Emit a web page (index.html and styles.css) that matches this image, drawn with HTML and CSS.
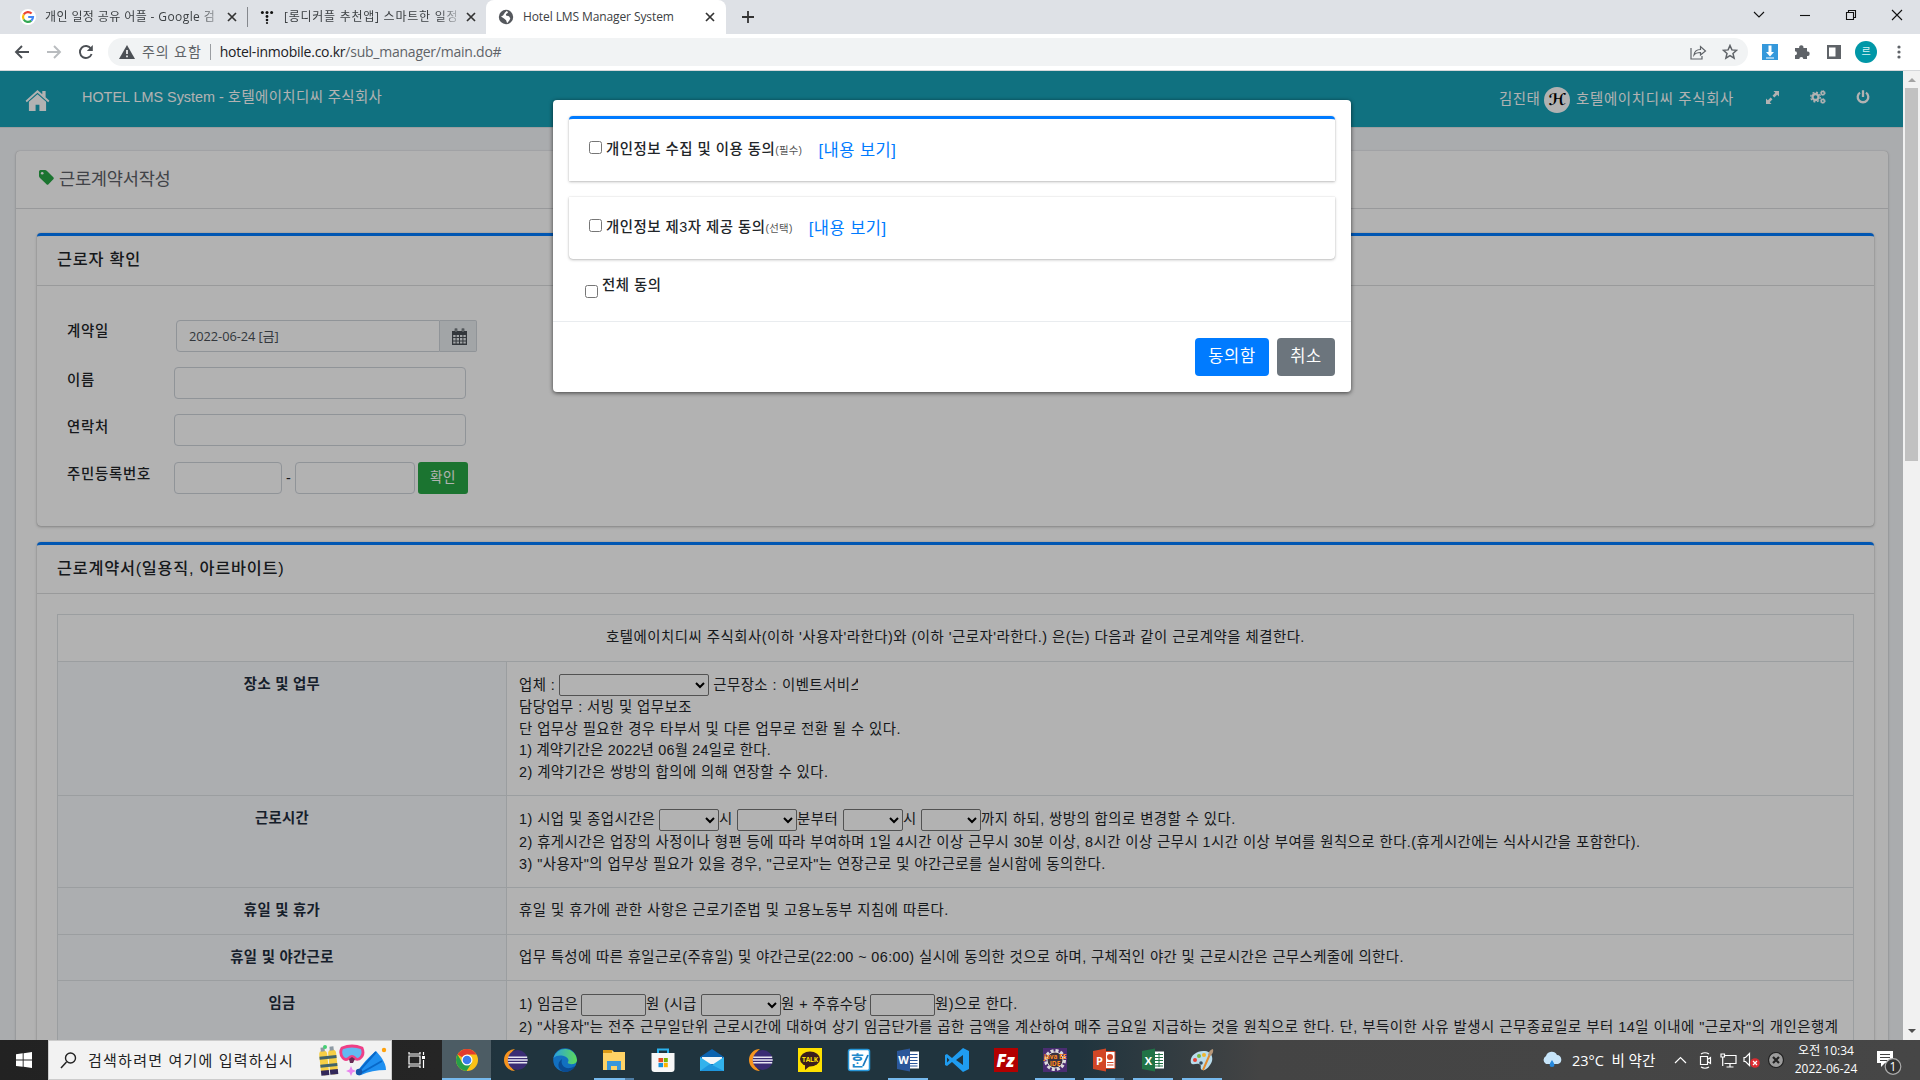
FILE: index.html
```html
<!DOCTYPE html>
<html lang="ko">
<head>
<meta charset="utf-8">
<title>Hotel LMS Manager System</title>
<link rel="stylesheet" href="styles.css">
</head>
<body>
<svg class="defs" width="0" height="0">
  <symbol id="close" viewBox="0 0 10 10"><path d="M1 1l8 8M9 1l-8 8" fill="none" stroke="currentColor" stroke-width="1.7"/></symbol>
  <symbol id="eclipse" viewBox="0 0 24 24"><path d="M11 1A11 11 0 0 0 11 23A13.500 13.500 0 0 1 11 1z" fill="#f7941e"/><circle cx="13.700" cy="12" r="10" fill="#3a2c74"/><path d="M4.200 9.200h19M3.700 12h20M4.200 14.800h19" stroke="#e8e6f2" stroke-width="1.500"/></symbol>
</svg>
<div class="screen">
  <header class="browser">
    <div class="tabs">
      <div class="tab tab-a">
        <svg class="fav" viewBox="0 0 16 16"><circle cx="8" cy="8" r="8" fill="#fff"/><g fill="none" stroke-width="2.2"><path d="M11.6 4.6A5 5 0 0 0 3.7 5.5" stroke="#ea4335"/><path d="M3.7 5.5a5 5 0 0 0 0 5" stroke="#fbbc05"/><path d="M3.7 10.5a5 5 0 0 0 7.6 1.2" stroke="#34a853"/><path d="M11.3 11.7A5 5 0 0 0 13 8H8.2" stroke="#4285f4"/></g></svg>
        <span class="ttl fade">개인 일정 공유 어플 - Google 검</span>
        <svg class="x"><use href="#close"/></svg>
      </div>
      <div class="tab tab-b">
        <svg class="fav" viewBox="0 0 16 16" fill="#111"><circle cx="3.4" cy="3.5" r="1.5"/><circle cx="8" cy="3.5" r="1.5"/><circle cx="12.6" cy="3.5" r="1.5"/><circle cx="8" cy="7.5" r="1.4"/><circle cx="8" cy="11" r="1.3"/><circle cx="8" cy="14" r="1.1"/></svg>
        <span class="ttl fade">[롱디커플 추천앱] 스마트한 일정</span>
        <svg class="x"><use href="#close"/></svg>
      </div>
      <div class="tab tab-c">
        <svg class="fav" viewBox="0 0 16 16"><circle cx="8" cy="8" r="7.2" fill="#55585d"/><path d="M9 1.8l1 2-2 1.2v1.6l3 .6 1.3 2.2-1 2-2.2 2.8-1-3L6 9.5 3 7.6l2-1.2 2-3z" fill="#fff"/></svg>
        <span class="ttl">Hotel LMS Manager System</span>
        <svg class="x"><use href="#close"/></svg>
      </div>
      <svg class="plus" viewBox="0 0 14 14"><path d="M7 1v12M1 7h12" stroke="#333" stroke-width="1.8"/></svg>
      <div class="winbtns">
        <svg width="12" height="12" viewBox="0 0 12 12"><path d="M1 3l5 5 5-5"/></svg>
        <svg width="12" height="12" viewBox="0 0 12 12"><path d="M1 6.5h10"/></svg>
        <svg width="12" height="12" viewBox="0 0 12 12"><path d="M1.5 3.5h7v7h-7zM3.5 3.500V1.500h7v7H8.500"/></svg>
        <svg width="12" height="12" viewBox="0 0 12 12"><path d="M1 1l10 10M11 1L1 11"/></svg>
      </div>
    </div>
    <div class="toolbar">
      <svg class="nav" viewBox="0 0 16 16"><path d="M15 8H2M8 2L2 8l6 6" stroke="#4c5055"/></svg>
      <svg class="nav" viewBox="0 0 16 16"><path d="M1 8h13M8 2l6 6-6 6" stroke="#b9bcbf"/></svg>
      <svg class="nav" viewBox="0 0 16 16"><path d="M13.600 10A6 6 0 1 1 13 4.800" stroke="#4c5055"/><path d="M14.800 1v6h-6z" fill="#4c5055" stroke="none"/></svg>
      <div class="omni">
        <svg width="16" height="14" viewBox="0 0 16 14"><path d="M8 0l8 14H0z" fill="#4c5055"/><path d="M8 5v4M8 10.500v1.700" stroke="#fff" stroke-width="1.600"/></svg>
        <span class="warn">주의 요함</span><i class="bar"></i>
        <span class="url"><b>hotel-inmobile.co.kr</b>/sub_manager/main.do#</span>
        <svg class="share" width="17" height="16" viewBox="0 0 17 16"><path d="M1 4v11h11v-3M4 11c.5-4 3-5.500 6.500-5.500V2.500L15.500 7l-5 4V8.500C7.500 8.500 5.500 9 4 11z" fill="none" stroke="#5f6368" stroke-width="1.200"/></svg>
        <svg width="16" height="16" viewBox="0 0 16 16"><path d="M8 1.500l1.900 4.400 4.700.4-3.600 3.100 1.100 4.700L8 11.600l-4.100 2.500L5 9.400 1.400 6.300l4.700-.4z" fill="none" stroke="#5f6368" stroke-width="1.500"/></svg>
      </div>
      <svg class="ext e1" viewBox="0 0 16 16"><path d="M0 0h16v16H0z" fill="#3498db"/><path d="M6.500 1.500h3V8H12l-4 4.500L4 8h2.500zM4 13.500h8v1H4z" fill="#fff"/></svg>
      <svg class="ext" viewBox="0 0 16 16"><path d="M1 4h4.200a2.200 2.200 0 1 1 4.200 0H13v3.600a2.200 2.200 0 1 1 0 4.300V15H9.300a2 2 0 0 0-4 0H1v-3.800a2 2 0 0 0 0-4z" fill="#5f6368"/></svg>
      <svg class="ext" viewBox="0 0 16 16"><path d="M1 1h14v14H1z" fill="#5f6368"/><path d="M3 3.500h6.500v9H3z" fill="#fff"/></svg>
      <span class="me">르</span>
      <svg class="ext" viewBox="0 0 16 16" fill="#5f6368"><circle cx="8" cy="3" r="1.600"/><circle cx="8" cy="8" r="1.600"/><circle cx="8" cy="13" r="1.600"/></svg>
    </div>
  </header>

  <div class="viewport">
    <main class="page">
      <nav class="top">
        <svg class="home" viewBox="0 0 25 22" fill="#fff"><path d="M12.500 0L0 11.300l1.300 1.500L12.500 3l11.200 9.800 1.300-1.500-4-3.600V1h-3.500v3.500z"/><path d="M12.500 4.500L3.500 12.300V22h7v-6.500h4V22h7v-9.700z"/></svg>
        <span class="brand">HOTEL LMS System - <span class="kr">호텔에이치디씨 주식회사</span></span>
        <span class="user">김진태</span><span class="logo">ℋ</span><span class="corp">호텔에이치디씨 주식회사</span>
        <svg class="t1" viewBox="0 0 14 14" fill="#fff"><path d="M8 0h6v6l-2-2-3 3-2-2 3-3zM0 14V8l2 2 3-3 2 2-3 3 2 2z"/></svg>
        <svg class="t2" viewBox="0 0 16 14"><g fill="none" stroke="#fff"><circle cx="5.500" cy="7" r="3" stroke-width="2.300"/><circle cx="5.500" cy="7" r="4.800" stroke-width="1.300" stroke-dasharray="2 1.770"/><circle cx="12.800" cy="3" r="1.600" stroke-width="1.500"/><circle cx="12.800" cy="3" r="2.500" stroke-width=".8" stroke-dasharray="1.200 .760"/><circle cx="12.800" cy="11" r="1.600" stroke-width="1.500"/><circle cx="12.800" cy="11" r="2.500" stroke-width=".8" stroke-dasharray="1.200 .760"/></g></svg>
        <svg class="t3" viewBox="0 0 14 14"><path d="M4 2.600a5.300 5.300 0 1 0 6 0M7 .3V7" fill="none" stroke="#fff" stroke-width="2.300"/></svg>
      </nav>
      <section class="outer">
        <h1><svg width="15" height="15" viewBox="0 0 15 15"><path d="M0 1.500Q0 0 1.500 0H6q1 0 2 1l6.300 6.300q1 1 0 2l-4.800 5q-1 1-2 0L1 8Q0 7 0 6z" fill="#28a745"/><circle cx="3.200" cy="3.200" r="1.300" fill="#fff"/></svg>근로계약서작성</h1>
        <div class="outer-body">
          <section class="card worker">
            <h2>근로자 확인</h2>
            <div class="form">
              <div class="row"><label>계약일</label><div class="date">2022-06-24 [금]</div><div class="addon"><svg width="15" height="17" viewBox="0 0 15 17"><path d="M0 3h15v14H0z" fill="#495057"/><path d="M1.200 7h2.400v2H1.200zM4.600 7h2.400v2H4.600zM8 7h2.400v2H8zM11.400 7h2.400v2h-2.400zM1.200 10h2.400v2.400H1.200zM4.600 10h2.400v2.400H4.600zM8 10h2.400v2.400H8zM11.400 10h2.400v2.400h-2.400zM1.200 13.400h2.400v2.200H1.200zM4.600 13.400h2.400v2.200H4.600zM8 13.400h2.400v2.200H8zM11.400 13.400h2.400v2.200h-2.400z" fill="#e9ecef"/><path d="M4 .5v4M11 .5v4" stroke="#495057" stroke-width="2.600"/><path d="M4 1.300v2.500M11 1.300v2.500" stroke="#e9ecef" stroke-width=".8"/></svg></div></div>
              <div class="row"><label>이름</label><div class="field w292"></div></div>
              <div class="row"><label>연락처</label><div class="field w292"></div></div>
              <div class="row last"><label>주민등록번호</label><div class="field w108"></div><span class="dash">-</span><div class="field w120"></div><div class="ok">확인</div></div>
            </div>
          </section>
          <section class="card contract">
            <h2>근로계약서(일용직, 아르바이트)</h2>
            <table>
              <colgroup><col class="c1"><col></colgroup>
              <tr><td colspan="2" class="intro">호텔에이치디씨 주식회사(이하 '사용자'라한다)와 (이하 '근로자'라한다.) 은(는) 다음과 같이 근로계약을 체결한다.</td></tr>
              <tr><th>장소 및 업무</th><td>
                <div class="line ctl"><span>업체 :</span><select class="s150"></select><span>근무장소 :</span><span class="clip">이벤트서비스</span></div>
                <div class="line">담당업무 : 서빙 및 업무보조</div>
                <div class="line">단 업무상 필요한 경우 타부서 및 다른 업무로 전환 될 수 있다.</div>
                <div class="line tight">1) 계약기간은 2022년 06월 24일로 한다.</div>
                <div class="line">2) 계약기간은 쌍방의 합의에 의해 연장할 수 있다.</div></td></tr>
              <tr><th>근로시간</th><td>
                <div class="line ctl"><span class="lead">1) 시업 및 종업시간은</span><select class="s60"></select><span class="g18">시</span><select class="s60 m0"></select><span class="g46">분부터</span><select class="s60 m0"></select><span class="g18">시</span><select class="s60 m0"></select><span>까지 하되, 쌍방의 합의로 변경할 수 있다.</span></div>
                <div class="line">2) 휴게시간은 업장의 사정이나 형편 등에 따라 부여하며 1일 4시간 이상 근무시 30분 이상, 8시간 이상 근무시 1시간 이상 부여를 원칙으로 한다.(휴게시간에는 식사시간을 포함한다).</div>
                <div class="line">3) "사용자"의 업무상 필요가 있을 경우, "근로자"는 연장근로 및 야간근로를 실시함에 동의한다.</div></td></tr>
              <tr><th>휴일 및 휴가</th><td><div class="line wide">휴일 및 휴가에 관한 사항은 근로기준법 및 고용노동부 지침에 따른다.</div></td></tr>
              <tr><th>휴일 및 야간근로</th><td><div class="line semi">업무 특성에 따른 휴일근로(주휴일) 및 야간근로(22:00 ~ 06:00) 실시에 동의한 것으로 하며, 구체적인 야간 및 근로시간은 근무스케줄에 의한다.</div></td></tr>
              <tr><th>임금</th><td>
                <div class="line ctl"><span class="lead2">1) 임금은</span><i class="inp i65"></i><span class="g55">원 (시급</span><select class="s80 m0"></select><span class="g89">원 + 주휴수당</span><i class="inp i65 m0"></i><span>원)으로 한다.</span></div>
                <div class="line wide">2) "사용자"는 전주 근무일단위 근로시간에 대하여 상기 임금단가를 곱한 금액을 계산하여 매주 금요일 지급하는 것을 원칙으로 한다. 단, 부득이한 사유 발생시 근무종료일로 부터 14일 이내에 "근로자"의 개인은행계</div>
                <div class="line ctl third"><i class="inp i100"></i><i class="inp i100"></i></div></td></tr>
            </table>
          </section>
        </div>
      </section>
    </main>
    <div class="shade"></div>
    <div class="modal">
      <div class="modal-body">
        <div class="agree first"><i class="cb"></i><b>개인정보 수집 및 이용 동의</b><small>(필수)</small><a>[내용 보기]</a></div>
        <div class="agree second"><i class="cb"></i><b>개인정보 제3자 제공 동의</b><small>(선택)</small><a>[내용 보기]</a></div>
        <div class="all"><i class="cb"></i><b>전체 동의</b></div>
      </div>
      <div class="modal-foot"><span class="btn blue">동의함</span><span class="btn gray">취소</span></div>
    </div>
    <aside class="scroll"><i class="up"></i><i class="thumb"></i><i class="down"></i></aside>
  </div>

  <footer class="taskbar">
    <div class="start"><svg width="16" height="16" viewBox="0 0 16 16" fill="#fff"><path d="M0 2.200L6.700 1.300v6.300H0zM7.600 1.200L16 0v7.600H7.600zM0 8.500h6.700v6.300L0 13.900zM7.600 8.500H16V16l-8.400-1.200z"/></svg></div>
    <div class="search">
      <svg width="17" height="17" viewBox="0 0 17 17"><path d="M1 16l5.500-6" stroke="#222" stroke-width="1.500"/><circle cx="10.500" cy="6" r="5" fill="none" stroke="#222" stroke-width="1.400"/></svg>
      <span>검색하려면 여기에 입력하십시</span>
      <svg class="dive" width="70" height="32" viewBox="0 0 70 32"><g transform="rotate(-6 10 18)"><rect x="2" y="6" width="8" height="25" rx="4" fill="#f6cf45"/><rect x="11" y="6" width="8" height="25" rx="4" fill="#f6cf45"/><path d="M2 12h17v3H2zM2 20h17v3H2z" fill="#41636a"/><path d="M2 26h8v5H2zM11 26h8v5h-8z" fill="#33285a"/><path d="M4 3h4v4H4zM13 3h4v4h-4z" fill="#8d99a3"/></g><circle cx="7" cy="3" r="2" fill="#44cf73"/><path d="M24 4q10-4 20 0 3 7-3 11-3 1-4-1-3-3-6 0-3 3-6 0-4-5-1-10z" fill="#62b9f2" stroke="#ee3f86" stroke-width="2.800"/><path d="M31 15l3-2 3 2-2 4h-3z" fill="#672b55"/><path d="M39 28q8-12 19-21l5 6q5 7 5 13-14 0-25 5-5 1-4-3z" fill="#1e8ff0"/><path d="M41 27l17-19M43 29l21-12" stroke="#0868c8" stroke-width="2"/><circle cx="41" cy="28" r="3.200" fill="#1556a9"/><path d="M33 22l1.500 3.500L38 27l-3.500 1.500L33 32l-1.500-3.500L28 27l3.500-1.500z" fill="#ea85ef"/><circle cx="66" cy="6" r="2.200" fill="#ffa20d"/></svg>
    </div>
    <div class="task tv"><svg width="18" height="18" viewBox="0 0 18 18" fill="none" stroke="#fff" stroke-width="1.200"><path d="M1 5h11v8H1zM1 1v2h11V1M1 17v-2h11v2M15.500 1v3M15.500 9v8"/><path d="M14 5h3v3h-3z" fill="#fff" stroke="none"/></svg></div>
    <div class="task on act"><svg viewBox="0 0 24 24"><circle cx="12" cy="12" r="11" fill="#fbc116"/><path d="M12 12L2.500 6.500A11 11 0 0 1 21.500 6.500H12z" fill="#e33b2e"/><path d="M2.500 6.500A11 11 0 0 0 11.500 23L17 14.500 7.500 15z" fill="#269e49"/><circle cx="12" cy="12" r="5.500" fill="#fff"/><circle cx="12" cy="12" r="4.300" fill="#3a7bec"/></svg></div>
    <div class="task"><svg viewBox="0 0 24 24"><use href="#eclipse" width="24" height="24"/></svg></div>
    <div class="task"><svg viewBox="0 0 24 24"><defs><linearGradient id="ed" x1="0" y1="0" x2="1" y2="0"><stop offset="0" stop-color="#2a9fe0"/><stop offset="1" stop-color="#5ddb58"/></linearGradient></defs><circle cx="12" cy="12" r="11.800" fill="#1270c0"/><path d="M.4 10A12 12 0 0 1 24 12c0 4-5 5-8.500 3.500-1.500-1 0-1.500 0-3.500C15 8 5 5 .4 10z" fill="url(#ed)"/><path d="M9 11c-2 6 3 10 8 9 3-.5 5-2 5-2-2 4-6 6-10 6C5 23 3 15 9 11z" fill="#0a4b92"/></svg></div>
    <div class="task on multi"><svg viewBox="0 0 24 24"><path d="M1 2h9l2 2h11v18H1z" fill="#ffd366"/><path d="M1 2h9v3H1z" fill="#dc9a16"/><path d="M5 13h14v9h-4v-4H9v4H5z" fill="#3a97dc"/></svg></div>
    <div class="task"><svg viewBox="0 0 24 24"><path d="M7 5V1.500h10V5" fill="none" stroke="#2ab2ee" stroke-width="2"/><path d="M.5 5h23v16q0 3-3 3h-17q-3 0-3-3z" fill="#f7f7f7"/><path d="M7.500 10H12v4.200H7.500z" fill="#e84b25"/><path d="M12.800 10h4v4.200h-4z" fill="#7db500"/><path d="M7.500 15H12v4.200H7.500z" fill="#1593de"/><path d="M12.800 15h4v4.200h-4z" fill="#fdb400"/></svg></div>
    <div class="task"><svg viewBox="0 0 24 24"><path d="M0 9l12-8 12 8v14H0z" fill="#0b62ae"/><path d="M2 9h20v7H2z" fill="#f3f6f8"/><path d="M0 9l12 8 12-8v14H0z" fill="#32b2ec"/><path d="M0 23l10-7 14 7z" fill="#1e96dd"/></svg></div>
    <div class="task"><svg viewBox="0 0 24 24"><use href="#eclipse" width="24" height="24"/></svg></div>
    <div class="task"><svg viewBox="0 0 24 24"><path d="M0 0h24v24H0z" fill="#ffe100"/><ellipse cx="12" cy="11" rx="10" ry="7.500" fill="#3b1e1e"/><path d="M7 16v6l6-5z" fill="#3b1e1e"/><text x="12" y="13.500" class="talk">TALK</text></svg></div>
    <div class="task"><svg viewBox="0 0 24 24"><rect x="1.500" y="1.500" width="21" height="21" rx="2" fill="#fff" stroke="#2796d8" stroke-width="1.500"/><text x="10.500" y="18" class="han">ᄒᆞᆫ</text><path d="M16 18l5-11" stroke="#1a78bd" stroke-width="1.800"/></svg></div>
    <div class="task on"><svg viewBox="0 0 24 24"><path d="M12 3.500h11v17H12z" fill="#fff"/><path d="M14 6.500h7.500M14 9.500h7.500M14 12.500h7.500M14 15.500h7.500M14 18h7.500" stroke="#2b579a"/><path d="M1 3l13-2.500v23L1 21z" fill="#2b579a"/><text x="7.500" y="16" class="ms">W</text></svg></div>
    <div class="task"><svg viewBox="0 0 24 24"><path d="M18 0l6 3v18l-6 3L7 14l-5 4-2-1V7l2-1 5 4z" fill="#1f9cf0"/><path d="M18 7v10l-7-5zM2 9.500v5L4.500 12z" fill="#20343e"/></svg></div>
    <div class="task"><svg viewBox="0 0 24 24"><path d="M0 0h24v24H0z" fill="#b30000"/><text x="11.500" y="19" class="fz">Fz</text></svg></div>
    <div class="task on"><svg viewBox="0 0 24 24"><path d="M0 0h24v24H0z" fill="#4a2d73"/><circle cx="12" cy="12" r="9.500" fill="none" stroke="#ddd" stroke-width="3" stroke-dasharray="3 2"/><circle cx="12" cy="12" r="8" fill="#39313f" stroke="#ddd"/><text x="12" y="11" class="java">Java EE</text><text x="12" y="18" class="java">IDE</text></svg></div>
    <div class="task on multi"><svg viewBox="0 0 24 24"><path d="M12 3.500h11v17H12z" fill="#fff" stroke="#d24726"/><circle cx="18" cy="9" r="3" fill="#d24726"/><path d="M15 14.500h6.500M15 17h6.500" stroke="#d24726"/><path d="M1 3l13-2.500v23L1 21z" fill="#d24726"/><text x="7.500" y="16.500" class="ms">P</text></svg></div>
    <div class="task on"><svg viewBox="0 0 24 24"><path d="M12 3.500h11v17H12z" fill="#fff"/><path d="M14 6.500h8M14 9.500h8M14 12.500h8M14 15.500h8M14 18h8M18 5v14" stroke="#217346"/><path d="M1 3l13-2.500v23L1 21z" fill="#217346"/><text x="7.500" y="16.500" class="ms">X</text></svg></div>
    <div class="task on"><svg viewBox="0 0 24 24"><path d="M1 15C-1 8 7 2 15 3c8 1 9 9 5 14-4 6-8 6-9 4s1-4-2-5-6 2-8-1z" fill="#b9dcec"/><circle cx="5" cy="12" r="2" fill="#e64337"/><circle cx="9" cy="8" r="2" fill="#79b942"/><circle cx="14" cy="7" r="2" fill="#f1b62e"/><circle cx="11" cy="15" r="1.800" fill="#34495b"/><path d="M13 22L20 6" stroke="#e28b2e" stroke-width="2"/><path d="M18 7q1-5 5-6 1 4-3 7z" fill="#b79778"/></svg></div>
    <div class="tray">
      <svg class="wx" width="22" height="18" viewBox="0 0 22 18"><path d="M5 13a4.500 4.500 0 0 1 0-8 6 6 0 0 1 11-1 4.600 4.600 0 0 1 1 9z" fill="#c7e5fa"/><path d="M11 9q-5 7 0 7t0-7z" fill="#2589de"/></svg>
      <span class="temp">23°C&nbsp; 비 약간</span>
      <svg class="more" width="13" height="8" viewBox="0 0 13 8"><path d="M1 7l5.500-5.500L12 7"/></svg>
      <svg class="cam" width="13" height="17" viewBox="0 0 13 17"><path d="M1.500 4.500h7v8h-7zM8.500 7.500l3-2v6l-3-2M2 2q4-2.500 8 0M2 15q4 2.500 8 0"/></svg>
      <svg class="net" width="17" height="15" viewBox="0 0 17 15"><path d="M4.500 2.500h11.500v8H4.500M10 10.500v3.500M6.500 14h7M1 1h3.500v3H1zM2.700 4v9"/></svg>
      <svg class="vol" width="17" height="16" viewBox="0 0 17 16"><path d="M1 5.500h1.500L6.500 1.500v12L2.500 9.500H1z"/><circle cx="12" cy="11" r="4.800" fill="#dc2c31" stroke="none"/><path d="M10 9l4 4M14 9l-4 4"/></svg>
      <svg class="off" width="16" height="16" viewBox="0 0 16 16"><circle cx="8" cy="8" r="7.500" fill="#9c9c9c" stroke="#222"/><path d="M5 5l6 6M11 5l-6 6" stroke="#222" stroke-width="2.200"/></svg>
      <div class="clock"><span>오전 10:34</span><span>2022-06-24</span></div>
      <svg class="note" width="26" height="26" viewBox="0 0 26 26"><path d="M1 2h16v12H9l-4 4v-4H1z" fill="#fff" stroke="none"/><path d="M4 5.500h10M4 8.500h10M4 11.500h7" stroke="#444"/><circle cx="17" cy="17.500" r="7.800" fill="#333" stroke="#aaa"/><text x="17" y="22" class="badge">1</text></svg>
    </div>
  </footer>
</div>
</body>
</html>
```
FILE: styles.css
```css
* { box-sizing: border-box; }
body { margin: 0; font-family: "Liberation Sans", "Noto Sans CJK KR", sans-serif; }
.defs { display: block; }
h1, h2 { margin: 0; }
.screen { width: 1920px; height: 1080px; overflow: hidden; display: flex; flex-direction: column; }

/* browser frame */
.browser { height: 71px; border-bottom: 1px solid #d5d7da; background: #fff; font-family: "Open Sans", "Noto Sans CJK KR", sans-serif; flex: none; }
.tabs { height: 34px; background: #dee1e6; display: flex; align-items: center; color: #3c4043; font-size: 12px; }
.tab { display: flex; align-items: center; height: 34px; }
.fav { width: 16px; height: 16px; margin-right: 9px; flex: none; }
.ttl { white-space: nowrap; overflow: hidden; line-height: 20px; width: 175px; flex: none; }
.fade { mask-image: linear-gradient(90deg, #000 155px, transparent 180px); }
.x { width: 10px; height: 10px; color: #333; margin-left: 7px; flex: none; }
.tab-a { width: 248px; padding-left: 20px; border-right: 1px solid #85888d; height: 20px; letter-spacing: .4px; }
.tab-b { width: 238px; padding-left: 11px; }
.tab-b .ttl { letter-spacing: .75px; }
.tab-c { width: 240px; padding-left: 12px; background: #fff; border-radius: 8px 8px 0 0; letter-spacing: -.1px; }
.plus { width: 14px; height: 14px; margin-left: 15px; }
.winbtns { margin-left: auto; display: flex; gap: 34px; padding-right: 17px; }
.winbtns svg { fill: none; stroke: #111; stroke-width: 1.1; margin-bottom: 5px; }
.toolbar { height: 36px; display: flex; align-items: center; padding-left: 14px; }
.nav { width: 16px; height: 16px; margin-right: 16px; fill: none; stroke-width: 1.9; flex: none; }
.omni { width: 1640px; height: 28px; margin-left: -2px; border-radius: 14px; background: #f1f3f4; display: flex; align-items: center; padding: 0 11px; font-size: 14px; line-height: 20px; color: #5f6368; }
.warn { margin: -1px 0 0 6px; letter-spacing: .9px; }
.omni svg:first-child { margin-right: 1px; }
.bar { width: 1px; height: 16px; background: #9a9da1; margin: 0 9px 0 8px; }
.url { letter-spacing: -.24px; margin-top: -1px; }
.url b { font-weight: 400; color: #202124; }
.share { margin-left: auto; margin-right: 15px; }
.omni svg:last-child { margin-right: -1px; }
.ext { width: 16px; height: 16px; margin-left: 16px; flex: none; }
.e1 { margin-left: 14px; }
.me { width: 22px; height: 22px; border-radius: 50%; background: #0097a7; color: #d8f3f5; font-size: 10px; line-height: 21px; text-align: center; margin: 0 -2px 0 13px; flex: none; }

/* page */
.viewport { position: relative; height: 969px; display: flex; overflow: hidden; flex: none; }
.page { width: 1903px; background: #f4f6f9; flex: none; }
.top { height: 57px; background: #17a2b8; border-bottom: 1px solid #dee2e6; display: flex; align-items: flex-start; color: #fff; font-size: 14.4px; }
.home { width: 25px; height: 21px; margin: 19px 32px 0 25px; }
.brand { margin-top: 15px; line-height: 22px; width: 1417px; }
.brand .kr { letter-spacing: .4px; }
.user, .corp { font-size: 14.4px; line-height: 22px; margin-top: 17px; letter-spacing: .7px; white-space: nowrap; }
.user { width: 45px; letter-spacing: .5px; }
.logo { width: 26px; height: 26px; margin-top: 16px; border-radius: 50%; background: #fff; color: #000; font: bold 16px/26px "DejaVu Serif", "DejaVu Sans", serif; text-align: center; }
.corp { margin-left: 6px; width: 190px; }
.t1 { width: 13px; height: 13px; margin-top: 20px; }
.t2 { width: 16px; height: 14px; margin: 19px 0 0 31px; }
.t3 { width: 14px; height: 14px; margin: 19px 0 0 30px; }
.outer { margin: 23px 15px 0 16px; height: 1000px; background: #fff; border-radius: 4px; box-shadow: 0 0 1px rgba(0,0,0,.25), 0 1px 3px rgba(0,0,0,.2); }
h1 { height: 58px; border-bottom: 1px solid #dadcde; padding: 0 0 5px 23px; display: flex; align-items: center; gap: 5px; font-size: 17.6px; font-weight: 400; color: #5d6167; letter-spacing: -.25px; }
.outer-body { padding: 24px 14px 0 21px; }
.card { border-top: 3px solid #007bff; border-radius: 4px; box-shadow: 0 0 1px rgba(0,0,0,.3), 0 1px 3px rgba(0,0,0,.25); }
h2 { height: 50px; border-bottom: 1px solid #dcdddf; padding: 0 0 2px 20px; line-height: 47px; font-size: 16.3px; font-weight: 500; color: #212529; letter-spacing: .75px; }
.worker { height: 293px; margin-bottom: 16px; }
.form { padding: 34px 0 0 30px; font-size: 14.4px; color: #212529; }
.row { display: flex; height: 32px; margin-bottom: 15px; }
.row.last { margin-top: 16px; }
label { width: 107px; line-height: 22px; font-weight: 500; letter-spacing: .75px; margin-top: 2px; }
.row:first-child label { width: 109px; margin-top: 0; }
.row.last label { margin-top: 1px; }
.date { width: 264px; height: 32px; border: 1px solid #ced4da; border-radius: 4px 0 0 4px; padding-left: 12px; line-height: 31px; font-family: "Open Sans", "Noto Sans CJK KR", sans-serif; font-size: 12.8px; letter-spacing: -.05px; color: #495057; }
.addon { width: 37px; border: 1px solid #ced4da; border-left: 0; background: #e9ecef; display: flex; align-items: center; justify-content: center; border-radius: 0 2px 2px 0; padding-left: 2px; }
.field { height: 32px; border: 1px solid #ced4da; border-radius: 4px; }
.w292 { width: 292px; } .w108 { width: 108px; } .w120 { width: 120px; }
.dash { width: 13px; text-align: center; line-height: 32px; }
.ok { margin-left: 3px; width: 50px; background: #28a745; color: #fff; border-radius: 3px; text-align: center; line-height: 32px; font-size: 13.5px; letter-spacing: .5px; }
.contract { height: 700px; }
.contract h2 { height: 49px; }
table { margin: 20px 0 0 20px; width: 1797px; border-collapse: collapse; table-layout: fixed; font-size: 14.4px; line-height: 21.6px; color: #212529; letter-spacing: .45px; }
.c1 { width: 449px; }
td, th { border: 1px solid #dee2e6; padding: 12px; vertical-align: top; }
th { background: #f7f9fc; font-weight: 700; letter-spacing: .3px; color: #1f2d3d; }
.intro { text-align: center; letter-spacing: .5px; }
.line { height: 21.5px; white-space: nowrap; }
.wide { letter-spacing: .5px; }
.semi { letter-spacing: .4px; }
.tight { letter-spacing: .2px; }
.lead { width: 136px; }
.lead2 { width: 58px; }
.ctl { height: 23.8px; display: flex; align-items: center; }
select { height: 22px; margin: 0 4px; border: 1px solid #767676; border-radius: 2px; background-color: #fff; flex: none; }
.m0 { margin-left: 0 !important; }
.s150 { width: 150px; }
.s60 { width: 60px; margin-right: 0; }
.s80 { width: 80px; margin-right: 0; }
.g18 { width: 18px; } .g46 { width: 46px; } .g55 { width: 55px; } .g89 { width: 89px; }
.clip { width: 76px; overflow: hidden; margin-left: 5px; }
.inp { height: 22px; border: 1px solid #767676; border-radius: 2px; margin-left: 4px; background: #fff; flex: none; }
.i65 { width: 65px; } .i100 { width: 100px; }
.third { padding-left: 68px; gap: 40px; }

.shade { position: absolute; left: 0; top: 0; width: 1903px; height: 969px; background: rgba(0,0,0,.3); }
.modal { position: absolute; left: 553px; top: 29px; width: 798px; height: 292px; background: #fff; border-radius: 4px; box-shadow: 0 1px 4px rgba(0,0,0,.65); color: #212529; }
.modal-body { height: 222px; padding: 16px 16px 0 16px; border-bottom: 1px solid #e9ecef; }
.agree { display: flex; padding-left: 20px; box-shadow: 0 0 1px rgba(0,0,0,.25), 0 1px 3px rgba(0,0,0,.25); white-space: nowrap; }
.first { height: 65px; border-top: 3px solid #007bff; border-radius: 4px 4px 0 0; padding-top: 22px; margin-bottom: 16px; }
.second { height: 62px; border-radius: 0 0 4px 4px; padding-top: 22px; }
.cb { width: 13px; height: 13px; border: 1px solid #767676; border-radius: 2.5px; margin-right: 4px; flex: none; }
.modal b { font-size: 14.4px; font-weight: 500; line-height: 16px; letter-spacing: .5px; }
.modal small { font-size: 10.4px; line-height: 20px; color: #555; letter-spacing: .3px; }
.modal a { color: #007bff; font-size: 16.5px; line-height: 18px; margin-left: 16px; letter-spacing: .5px; }
.all { display: flex; padding: 17px 0 0 16px; }
.all .cb { margin-top: 9px; }
.all b { line-height: 18px; }
.modal-foot { display: flex; justify-content: flex-end; padding: 16px 16px 0; gap: 8px; }
.btn { height: 38px; line-height: 37px; border-radius: 4px; color: #fff; font-size: 16.5px; text-align: center; letter-spacing: .6px; }
.blue { background: #007bff; width: 74px; }
.gray { background: #6c757d; width: 58px; }

.scroll { width: 17px; background: #f1f1f1; display: flex; flex-direction: column; align-items: center; }
.up, .down { border: 4px solid transparent; }
i.up { border-bottom: 4px solid #a3a3a3; border-top: 0; margin: 7px 0 6px; }
.thumb { width: 13px; height: 373px; background: #c1c1c1; }
i.down { border-top: 4px solid #505050; border-bottom: 0; margin-top: auto; margin-bottom: 7px; }

/* taskbar */
.taskbar { height: 40px; flex: none; display: flex; background: linear-gradient(90deg, #222 0, #252525 440px, #20343e 495px, #20343e 1080px, #444 1260px, #464646 100%); color: #fff; font-family: "Open Sans", "Noto Sans CJK KR", sans-serif; }
.start { width: 48px; display: flex; align-items: center; justify-content: center; }
.search { width: 344px; background: #f2f2f2; border: 1px solid #ccc; display: flex; align-items: center; padding-left: 11px; color: #222; font-size: 15px; }
.search span { margin-left: 11px; width: 224px; letter-spacing: 1.25px; white-space: nowrap; margin-top: -2px; }
.dive { margin-left: 6px; }
.task { width: 49px; display: flex; align-items: center; justify-content: center; }
.task svg { width: 24px; height: 24px; }
.tv { width: 50px; }
.tv svg { width: 18px; height: 18px; }
.on { background: linear-gradient(#76b9ed, #76b9ed) 5px 38px / 40px 2px no-repeat; }
.multi { background: linear-gradient(90deg, #76b9ed 31px, #4f7ea5 31px) 5px 38px / 40px 2px no-repeat; }
.act { background: linear-gradient(#4c5c64 38px, #76b9ed 38px); }
.task text { text-anchor: middle; fill: #fff; font-weight: 700; }
.task .talk { font-size: 6.500px; fill: #ffe100; }
.task .han { font-size: 15px; fill: #2389cb; font-family: "Noto Sans CJK KR", sans-serif; }
.task .ms { font-size: 11px; }
.task .fz { font-size: 17px; font-style: italic; font-weight: 800; }
.task .java { font-size: 6.500px; fill: #ff8b20; }
.tray { margin-left: auto; display: flex; align-items: center; width: 379px; padding-right: 10px; }
.tray svg { fill: none; stroke: #fff; stroke-width: 1.2; flex: none; }
.tray .wx { stroke: none; }
.temp { font-size: 14.5px; margin: -1px 0 0 9px; width: 86px; white-space: nowrap; }
.more { margin-left: 16px; }
.cam { margin-left: 12px; }
.net { margin-left: 8px; }
.vol { margin-left: 6px; }
.off { margin-left: 8px; }
.clock { display: flex; flex-direction: column; width: 70px; align-items: center; font-size: 12px; line-height: 18px; margin-left: 7px; white-space: nowrap; }
.note { margin-left: 15px; margin-top: 3px; }
.badge { font-size: 12px; text-anchor: middle; fill: #fff; stroke: none; }
```
